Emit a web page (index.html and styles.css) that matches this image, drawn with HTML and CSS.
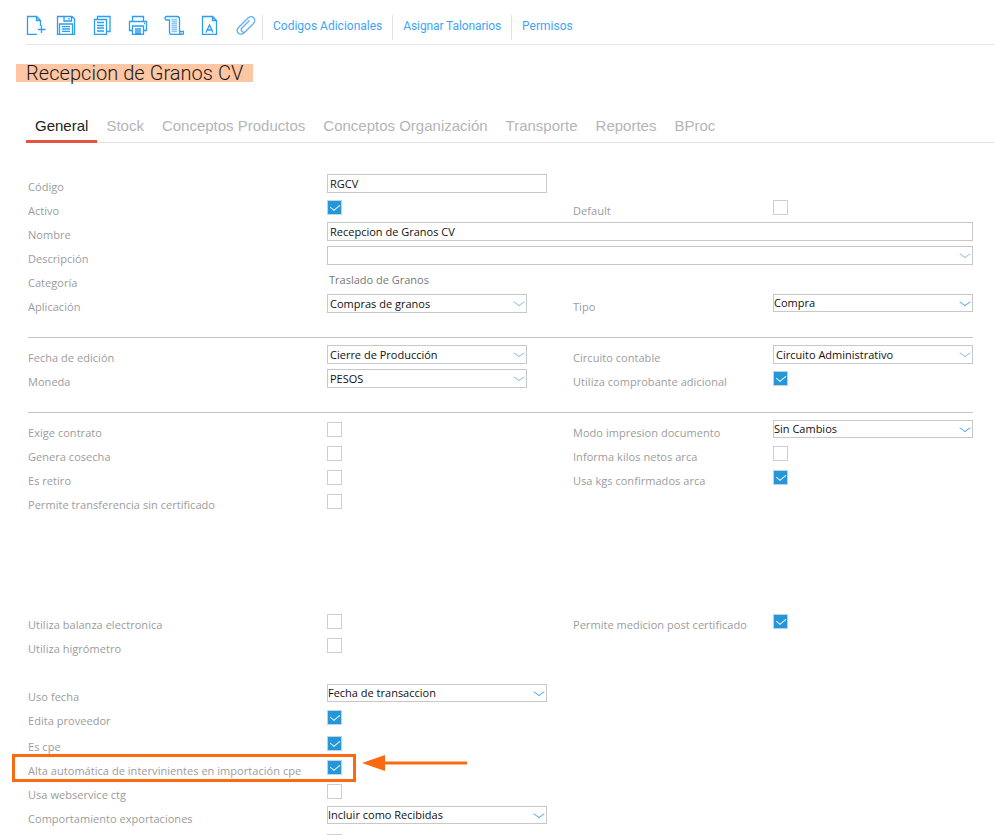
FILE: index.html
```html
<!DOCTYPE html>
<html>
	<head>
		<meta charset="UTF-8">
		<title>Recepcion de Granos CV</title>
		<link rel="stylesheet" href="styles.css">
	</head>
	<body>
		<div class="toolbar">
			<div class="tools">
				<svg class="icon first" viewBox="0 0 20 20"><path d="M11 19.500H1.500V1.500H10.500L14.500 5.500V11M10.500 1.500V5.500H14.500M12 14.500H19.500M15.500 10.500V18"/></svg>
				<svg class="icon" viewBox="0 0 20 20"><path d="M1.500 1.500H16L18.500 4V19.500H1.500ZM8 1.500V6H15.500V1.500M13 3V4.500M3.500 19.500V9H16.500V19.500M6 11.700H14M6 14H14M6 16.300H14"/></svg>
				<svg class="icon" viewBox="0 0 20 20"><path d="M5.500 4.500V1.500H18V16.500H14.500M2.500 4.500H14.500V19.500H2.500ZM5 7.500H12M5 10.500H12M5 13H12M5 16H12"/></svg>
				<svg class="icon" viewBox="0 0 20 20"><path d="M4.500 6.500V1.500H15.500V6.500M4.500 15.500H1.500V6.500H18.500V15.500H15.500M4.500 11H15.500V19.500H4.500ZM7 14H13M7 16H13M7 18H13M16 8.500H17"/></svg>
				<svg class="icon" viewBox="0 0 20 20"><path d="M2.500 1.500H13C14.500 1.500 15.500 2.500 15.500 4V16.500C15.500 18.500 17 19.500 18 19.500H8C6.500 19.500 5.500 18.500 5.500 17V5H2.500C1.500 5 1 4 1 3C1 2 1.500 1.500 2.500 1.500M15.500 16.500H19.500V18C19.500 19 19 19.500 18 19.500"/><path class="faint" d="M7.500 4.500H13M7.500 6.500H13M7.500 8.500H13M7.500 10.500H13M7.500 12.500H13M7.500 14.500H13M7.500 16.500H13"/></svg>
				<svg class="icon" viewBox="0 0 20 20"><path d="M2.500 1.500H12.500L16.500 5.500V19.500H2.500ZM12.500 1.500V5.500H16.500M6 17.500L9.500 10L13 17.500M7.300 15H11.700"/></svg>
				<svg class="icon clip" viewBox="0 0 20 20"><path d="M17.500 8.500L8.500 17.500C6.500 19.500 3.500 19.500 2.200 18C.8 16.500 1 14 3 12L12 3C13.500 1.500 16 1.200 17.700 2.800C19.300 4.500 19 7 17.500 8.500L9.500 16.500C8.500 17.500 7 17.500 6 16.500C5 15.500 5 14 6 13L13.500 5.500"/></svg>
			</div>
			<a class="tool-link">Codigos Adicionales</a>
			<a class="tool-link narrow">Asignar Talonarios</a>
			<a class="tool-link">Permisos</a>
		</div>

		<h1 class="title"><span>Recepcion de Granos CV</span></h1>

		<ul class="tabs">
			<li class="tab active">General</li>
			<li class="tab">Stock</li>
			<li class="tab">Conceptos Productos</li>
			<li class="tab">Conceptos Organización</li>
			<li class="tab">Transporte</li>
			<li class="tab">Reportes</li>
			<li class="tab">BProc</li>
		</ul>

		<div class="form">
			<div class="row">
				<label>Código</label>
				<input class="field" type="text" value="RGCV" readonly>
			</div>
			<div class="row">
				<label>Activo</label>
				<div><span class="check on"></span></div>
				<label class="right">Default</label>
				<div><span class="check"></span></div>
			</div>
			<div class="row">
				<label>Nombre</label>
				<input class="field wide" type="text" value="Recepcion de Granos CV" readonly>
			</div>
			<div class="row">
				<label>Descripción</label>
				<div class="field wide combo"></div>
			</div>
			<div class="row">
				<label>Categoría</label>
				<div class="plain">Traslado de Granos</div>
			</div>
			<div class="row">
				<label>Aplicación</label>
				<div class="field short combo">Compras de granos</div>
				<label class="right">Tipo</label>
				<div class="field combo tight">Compra</div>
			</div>
			<hr class="sep">
			<div class="row">
				<label>Fecha de edición</label>
				<div class="field short combo">Cierre de Producción</div>
				<label class="right">Circuito contable</label>
				<div class="field combo">Circuito Administrativo</div>
			</div>
			<div class="row">
				<label>Moneda</label>
				<div class="field short combo">PESOS</div>
				<label class="right">Utiliza comprobante adicional</label>
				<div><span class="check on"></span></div>
			</div>
			<hr class="sep">
			<div class="row">
				<label>Exige contrato</label>
				<div><span class="check"></span></div>
				<label class="right">Modo impresion documento</label>
				<div class="field combo tight">Sin Cambios</div>
			</div>
			<div class="row">
				<label>Genera cosecha</label>
				<div><span class="check"></span></div>
				<label class="right">Informa kilos netos arca</label>
				<div><span class="check"></span></div>
			</div>
			<div class="row">
				<label>Es retiro</label>
				<div><span class="check"></span></div>
				<label class="right">Usa kgs confirmados arca</label>
				<div><span class="check on"></span></div>
			</div>
			<div class="row">
				<label>Permite transferencia sin certificado</label>
				<div><span class="check"></span></div>
			</div>
			<div class="gap-large"></div>
			<div class="row">
				<label>Utiliza balanza electronica</label>
				<div><span class="check"></span></div>
				<label class="right">Permite medicion post certificado</label>
				<div><span class="check on"></span></div>
			</div>
			<div class="row">
				<label>Utiliza higrómetro</label>
				<div><span class="check"></span></div>
			</div>
			<div class="gap-small"></div>
			<div class="row">
				<label>Uso fecha</label>
				<div class="field medium combo tight">Fecha de transaccion</div>
			</div>
			<div class="row tall">
				<label>Edita proveedor</label>
				<div><span class="check on"></span></div>
			</div>
			<div class="row">
				<label>Es cpe</label>
				<div><span class="check on"></span></div>
			</div>
			<div class="row">
				<label>Alta automática de intervinientes en importación cpe</label>
				<div><span class="check on"></span></div>
			</div>
			<div class="row">
				<label>Usa webservice ctg</label>
				<div><span class="check"></span></div>
			</div>
			<div class="row tall">
				<label>Comportamiento exportaciones</label>
				<div class="field medium combo tight">Incluir como Recibidas</div>
			</div>
			<div class="row">
				<label></label>
				<div><span class="check"></span></div>
			</div>
		</div>

		<div class="callout"></div>
		<svg class="arrow" viewBox="0 0 105 16"><path d="M0 8L23 0V6.500H105V9.500H23V16Z"/></svg>
	</body>
</html>
```
FILE: styles.css
```css
*{
	padding: 0;
	margin: 0;
	box-sizing: border-box;
}
html,body{
	height: 835px;
	overflow: hidden;
}
body{
	position: relative;
	background: #fff;
	font-family: "Open Sans", "Noto Sans", sans-serif;
	font-size: 11px;
	color: #111;
}
ul{
	list-style: none;
}
.toolbar{
	display: flex;
	align-items: flex-start;
	height: 31px;
	margin: 14px 0 0 26px;
	padding-top: 1px;
	border-bottom: 1px solid #e6e6e6;
	font-family: Roboto, sans-serif;
}
.tools{
	display: flex;
	gap: 16px;
	width: 237px;
	height: 25px;
	border-right: 1px solid #e2e2e2;
}
.icon{
	width: 20px;
	height: 20px;
	fill: none;
	stroke: #2a9df4;
	stroke-width: 1.3;
	flex: none;
}
.icon.first{
	margin-right: -6px;
}
.icon.clip{
	stroke: #5cb0f2;
}
.icon .faint{
	stroke: #8cc6f5;
}
.tool-link{
	display: flex;
	align-items: center;
	height: 25px;
	padding: 0 10px 3px;
	border-right: 1px solid #e2e2e2;
	color: #3fa4f5;
	font-size: 12px;
}
.tool-link.narrow{
	letter-spacing: -.1px;
}
.tool-link:last-child{
	border-right: none;
}
.title{
	height: 18px;
	margin: 19px 0 0 16px;
	font-family: Roboto, sans-serif;
	font-weight: 300;
	font-size: 20px;
	letter-spacing: .05px;
	color: #1a1a1a;
}
.title span{
	display: block;
	width: 237px;
	height: 18px;
	padding-left: 10px;
	line-height: 19px;
	background: #ffc6a3;
}
.tabs{
	display: flex;
	height: 28px;
	margin: 33px 0 0 26px;
	border-bottom: 1px solid #e2e2e2;
	font-family: "Liberation Sans", sans-serif;
	font-size: 15px;
	color: #b5b5b5;
}
.tab{
	height: 27px;
	padding: 2px 9px 0;
	line-height: 18px;
}
.tab.active{
	border-bottom: 3px solid #e5533d;
	height: 28px;
	color: #222;
}
.form{
	margin-top: 31px;
}
.row{
	display: grid;
	grid-template-columns: 28px 299px 246px 200px 200px;
	height: 24px;
}
.row.tall{
	height: 26px;
}
.row label{
	grid-column: 2;
	padding-top: 5px;
	line-height: 15px;
	letter-spacing: .04px;
	color: #9c9c9c;
	white-space: nowrap;
}
.row label.right{
	grid-column: 4;
}
.field{
	display: block;
	height: 19px;
	padding-left: 2px;
	border: 1px solid #c8c8c8;
	background: #fff;
	font-family: inherit;
	font-size: 11px;
	line-height: 17px;
	color: #111;
	outline: none;
}
input.field{
	width: 220px;
}
.field.wide{
	grid-column: 3 / 6;
	width: 646px;
}
.field.short{
	width: 200px;
}
.field.medium{
	width: 220px;
}
.field.tight{
	height: 18px;
	padding-left: 0;
	line-height: 15px;
}
.combo{
	position: relative;
	white-space: nowrap;
}
.combo:after{
	content: "";
	position: absolute;
	right: 3px;
	top: 3px;
	width: 7px;
	height: 7px;
	border-right: 1px solid #8ab8e8;
	border-bottom: 1px solid #8ab8e8;
	transform: scaleY(.7) rotate(45deg);
}
.combo.tight:after{
	border-color: #4f9be8;
}
.plain{
	grid-column: 3;
	padding: 2px 0 0 2px;
	line-height: 15px;
	color: #777;
}
.check{
	display: block;
	width: 15px;
	height: 15px;
	margin-top: 2px;
	border: 1px solid #cfcfcf;
	background: #fff;
	position: relative;
}
.check.on{
	background: #2596d8;
	border-color: #bfd3e0;
}
.check.on:after{
	content: "";
	position: absolute;
	left: 4px;
	top: 1px;
	width: 5px;
	height: 8px;
	border-right: 1.5px solid #fff;
	border-bottom: 1.5px solid #fff;
	transform: scaleY(.8) rotate(45deg);
}
.sep{
	border: none;
	border-top: 1px solid #c4c4c4;
	margin: 19px 0 7px 28px;
	width: 945px;
}
.gap-large{
	height: 96px;
}
.gap-small{
	height: 24px;
}
.callout{
	position: absolute;
	left: 12px;
	top: 754px;
	width: 344px;
	height: 28px;
	border: 3px solid #fb6a10;
}
.arrow{
	position: absolute;
	left: 362px;
	top: 755px;
	width: 105px;
	height: 16px;
	fill: #fb6a10;
}
```
